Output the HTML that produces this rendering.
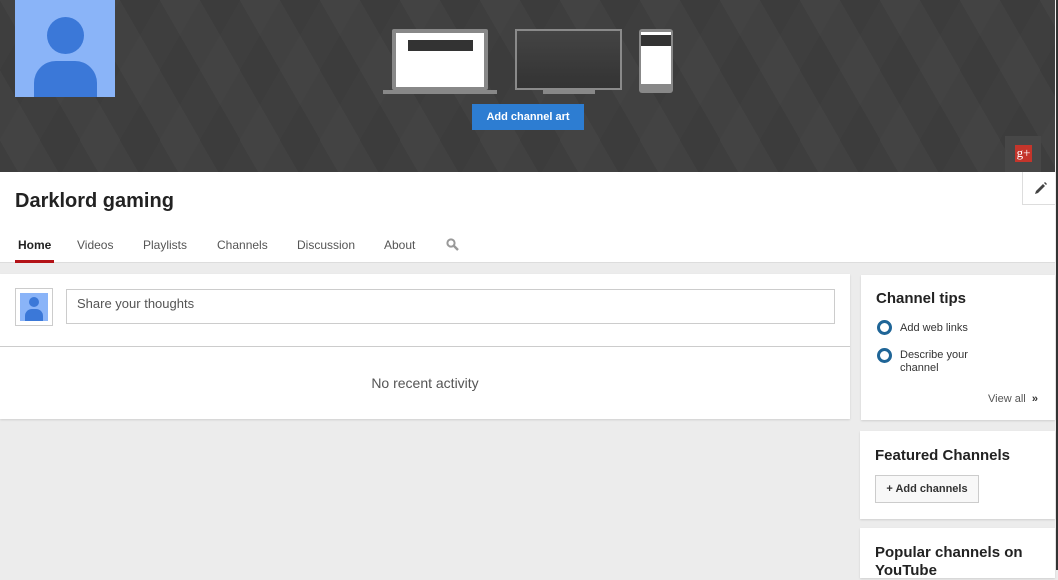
<!DOCTYPE html>
<html><head><meta charset="utf-8"><style>
*{margin:0;padding:0;box-sizing:border-box}
body{width:1058px;height:570px;overflow:hidden;background:#ececec;font-family:"Liberation Sans",Arial,sans-serif;position:relative}
.banner{position:absolute;left:0;top:0;width:1055px;height:172px;background:#3e3e3e;
background-image:linear-gradient(60deg,rgba(255,255,255,.025) 25%,transparent 25%,transparent 50%,rgba(255,255,255,.025) 50%,rgba(255,255,255,.025) 75%,transparent 75%),linear-gradient(-60deg,rgba(0,0,0,.04) 25%,transparent 25%,transparent 50%,rgba(0,0,0,.04) 50%,rgba(0,0,0,.04) 75%,transparent 75%);background-size:80px 140px}
.edge{position:absolute;left:1056px;top:0;width:2px;height:570px;background:#333}
.avatar{position:absolute;left:15px;top:0;width:100px;height:97px;background:#8ab4f8;overflow:hidden}
.avatar .h{position:absolute;left:32px;top:17px;width:37px;height:37px;border-radius:50%;background:#3b78d8}
.avatar .b{position:absolute;left:19px;top:61px;width:63px;height:40px;border-radius:22px 22px 0 0;background:#3b78d8}
.btn{position:absolute;left:472px;top:104px;width:112px;height:26px;background:#2d7dd2;color:#fff;font-weight:bold;font-size:11px;text-align:center;line-height:27px}
.head{position:absolute;left:0;top:172px;width:1055px;height:91px;background:#fff;border-bottom:1px solid #ddd}
.title{position:absolute;left:15px;top:190px;font-size:20px;font-weight:bold;color:#222}
.tabs{position:absolute;top:238px;left:0;font-size:12px;color:#555}
.tabs span{position:absolute;white-space:nowrap}
.ul{position:absolute;left:15px;top:260px;width:39px;height:3px;background:#b31217}
.card{position:absolute;background:#fff;box-shadow:0 1px 2px rgba(0,0,0,.12)}
.tip{position:absolute;font-size:11px;color:#333;line-height:13px}
.ring{position:absolute;width:15px;height:15px;border:3px solid #1f6597;border-radius:50%}
</style></head><body>
<div class="banner"></div>
<div class="avatar"><div class="h"></div><div class="b"></div></div>
<div style="position:absolute;left:392px;top:29px;width:96px;height:61px;background:#888;border-radius:2px"></div>
<div style="position:absolute;left:396px;top:33px;width:88px;height:54px;background:#fff"></div>
<div style="position:absolute;left:408px;top:40px;width:65px;height:11px;background:#333"></div>
<div style="position:absolute;left:383px;top:90px;width:114px;height:4px;background:#888"></div>
<div style="position:absolute;left:515px;top:29px;width:107px;height:61px;background:#8a8a8a"></div>
<div style="position:absolute;left:517px;top:31px;width:103px;height:57px;background:linear-gradient(#444,#333)"></div>
<div style="position:absolute;left:543px;top:90px;width:52px;height:4px;background:#888"></div>
<div style="position:absolute;left:639px;top:29px;width:34px;height:64px;background:#888;border-radius:3px"></div>
<div style="position:absolute;left:641px;top:32px;width:30px;height:52px;background:#fff"></div>
<div style="position:absolute;left:641px;top:35px;width:30px;height:11px;background:#333"></div>
<div class="btn">Add channel art</div>
<div style="position:absolute;left:1005px;top:136px;width:36px;height:36px;background:#474747"></div>
<div style="position:absolute;left:1015px;top:145px;width:17px;height:17px;background:#c4352b;color:#fff;font-size:13px;line-height:16px;text-align:center;font-family:'Liberation Serif',serif">g+</div>
<div class="head"></div>
<div style="position:absolute;left:1022px;top:172px;width:33px;height:33px;background:#fff;border:1px solid #ddd;border-right:none;border-top:none"><svg width="33" height="33" viewBox="0 0 33 33"><path d="M12 22l1-3 7-7 2 2-7 7z" fill="#444"/><path d="M21 11l1-1 2 2-1 1z" fill="#444"/></svg></div>
<div class="title">Darklord gaming</div>
<div class="tabs">
<span style="left:18px;color:#222;font-weight:bold">Home</span>
<span style="left:77px">Videos</span>
<span style="left:143px">Playlists</span>
<span style="left:217px">Channels</span>
<span style="left:297px">Discussion</span>
<span style="left:384px">About</span>
<span style="left:446px;color:#999">
<svg width="13" height="13" viewBox="0 0 13 13"><circle cx="5" cy="5" r="3.6" fill="none" stroke="#999" stroke-width="2"/><path d="M7.5 7.5L12 12" stroke="#999" stroke-width="2.4"/></svg></span>
</div>
<div class="ul"></div>
<div class="card" style="left:0;top:274px;width:850px;height:145px"></div>
<div style="position:absolute;left:0;top:346px;width:850px;height:1px;background:#ccc"></div>
<div style="position:absolute;left:15px;top:288px;width:38px;height:38px;border:1px solid #ccc;background:#fff"></div>
<div style="position:absolute;left:20px;top:293px;width:28px;height:28px;background:#8ab4f8;overflow:hidden">
<div style="position:absolute;left:9px;top:4px;width:10px;height:10px;border-radius:50%;background:#3b78d8"></div>
<div style="position:absolute;left:5px;top:16px;width:18px;height:14px;border-radius:7px 7px 0 0;background:#3b78d8"></div></div>
<div style="position:absolute;left:66px;top:289px;width:769px;height:35px;border:1px solid #ccc;background:#fff;font-size:13px;color:#555;padding:6px 10px">Share your thoughts</div>
<div style="position:absolute;left:0;top:375px;width:850px;text-align:center;font-size:14px;color:#555">No recent activity</div>
<div class="card" style="left:861px;top:275px;width:194px;height:145px"></div>
<div style="position:absolute;left:876px;top:290px;font-size:15px;font-weight:bold;color:#222">Channel tips</div>
<div class="ring" style="left:877px;top:320px"></div>
<div class="tip" style="left:900px;top:322px">Add web links</div>
<div class="ring" style="left:877px;top:348px"></div>
<div class="tip" style="left:900px;top:349px">Describe your<br>channel</div>
<div class="tip" style="left:988px;top:393px;color:#555">View all &nbsp;<b style="color:#333">»</b></div>
<div class="card" style="left:860px;top:431px;width:195px;height:88px"></div>
<div style="position:absolute;left:875px;top:447px;font-size:15px;font-weight:bold;color:#222">Featured Channels</div>
<div style="position:absolute;left:875px;top:475px;width:104px;height:28px;border:1px solid #ccc;background:#f8f8f8;font-size:11px;font-weight:bold;color:#333;text-align:center;line-height:26px">+ Add channels</div>
<div class="card" style="left:860px;top:528px;width:195px;height:50px"></div>
<div style="position:absolute;left:875px;top:544px;font-size:15px;font-weight:bold;color:#222;line-height:18px">Popular channels on<br>YouTube</div>
<div class="edge"></div>
</body></html>
